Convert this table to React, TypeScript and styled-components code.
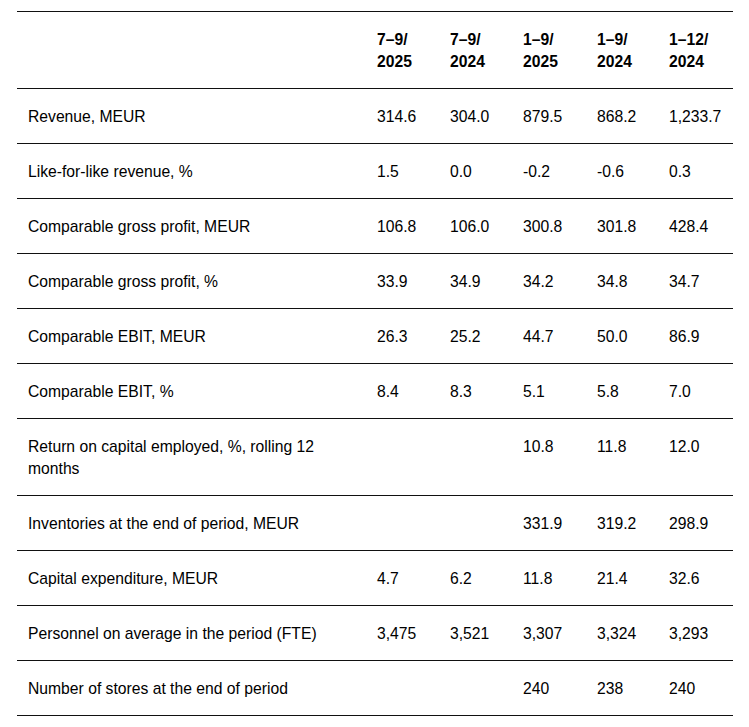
import React from "react";
import styled, { createGlobalStyle } from "styled-components";

const Global = createGlobalStyle`
  html, body { margin: 0; padding: 0; background: #ffffff; }
  body { font-family: "Liberation Sans", Arial, Helvetica, sans-serif; color: #000000; }
`;

const Page = styled.div`
  padding: 11px 16px 0 17px;
`;

const Table = styled.table`
  width: 716px;
  border-collapse: collapse;
  table-layout: fixed;
  font-size: 15.7px;
  line-height: 22px;
`;

const Col = styled.col<{ $w: number }>`
  width: ${(p) => p.$w}px;
`;

const HeadRow = styled.tr`
  border-top: 1px solid #111;
  border-bottom: 1px solid #111;
`;

const HeadCell = styled.th`
  padding: 17px 2px 15px 11px;
  text-align: left;
  font-weight: 700;
  vertical-align: top;
`;

const Row = styled.tr`
  border-bottom: 1px solid #111;
`;

const Label = styled.td`
  padding: 17px 20px 15px 11px;
  vertical-align: top;
`;

const Value = styled.td`
  padding: 17px 0 15px 11px;
  vertical-align: top;
  white-space: nowrap;
`;

const columns = [
  ["7–9/", "2025"],
  ["7–9/", "2024"],
  ["1–9/", "2025"],
  ["1–9/", "2024"],
  ["1–12/", "2024"],
];

const rows: [string, string[]][] = [
  ["Revenue, MEUR", ["314.6", "304.0", "879.5", "868.2", "1,233.7"]],
  ["Like-for-like revenue, %", ["1.5", "0.0", "-0.2", "-0.6", "0.3"]],
  ["Comparable gross profit, MEUR", ["106.8", "106.0", "300.8", "301.8", "428.4"]],
  ["Comparable gross profit, %", ["33.9", "34.9", "34.2", "34.8", "34.7"]],
  ["Comparable EBIT, MEUR", ["26.3", "25.2", "44.7", "50.0", "86.9"]],
  ["Comparable EBIT, %", ["8.4", "8.3", "5.1", "5.8", "7.0"]],
  ["Return on capital employed, %, rolling 12 months", ["", "", "10.8", "11.8", "12.0"]],
  ["Inventories at the end of period, MEUR", ["", "", "331.9", "319.2", "298.9"]],
  ["Capital expenditure, MEUR", ["4.7", "6.2", "11.8", "21.4", "32.6"]],
  ["Personnel on average in the period (FTE)", ["3,475", "3,521", "3,307", "3,324", "3,293"]],
  ["Number of stores at the end of period", ["", "", "240", "238", "240"]],
];

const widths = [349, 73, 73, 74, 72, 75];

export default function App() {
  return (
    <Page>
      <Global />
      <Table>
        <colgroup>
          {widths.map((w, i) => (
            <Col key={i} $w={w} />
          ))}
        </colgroup>
        <thead>
          <HeadRow>
            <HeadCell />
            {columns.map(([a, b], i) => (
              <HeadCell key={i}>
                {a}
                <br />
                {b}
              </HeadCell>
            ))}
          </HeadRow>
        </thead>
        <tbody>
          {rows.map(([label, values], i) => (
            <Row key={i}>
              <Label>{label}</Label>
              {values.map((v, j) => (
                <Value key={j}>{v}</Value>
              ))}
            </Row>
          ))}
        </tbody>
      </Table>
    </Page>
  );
}
